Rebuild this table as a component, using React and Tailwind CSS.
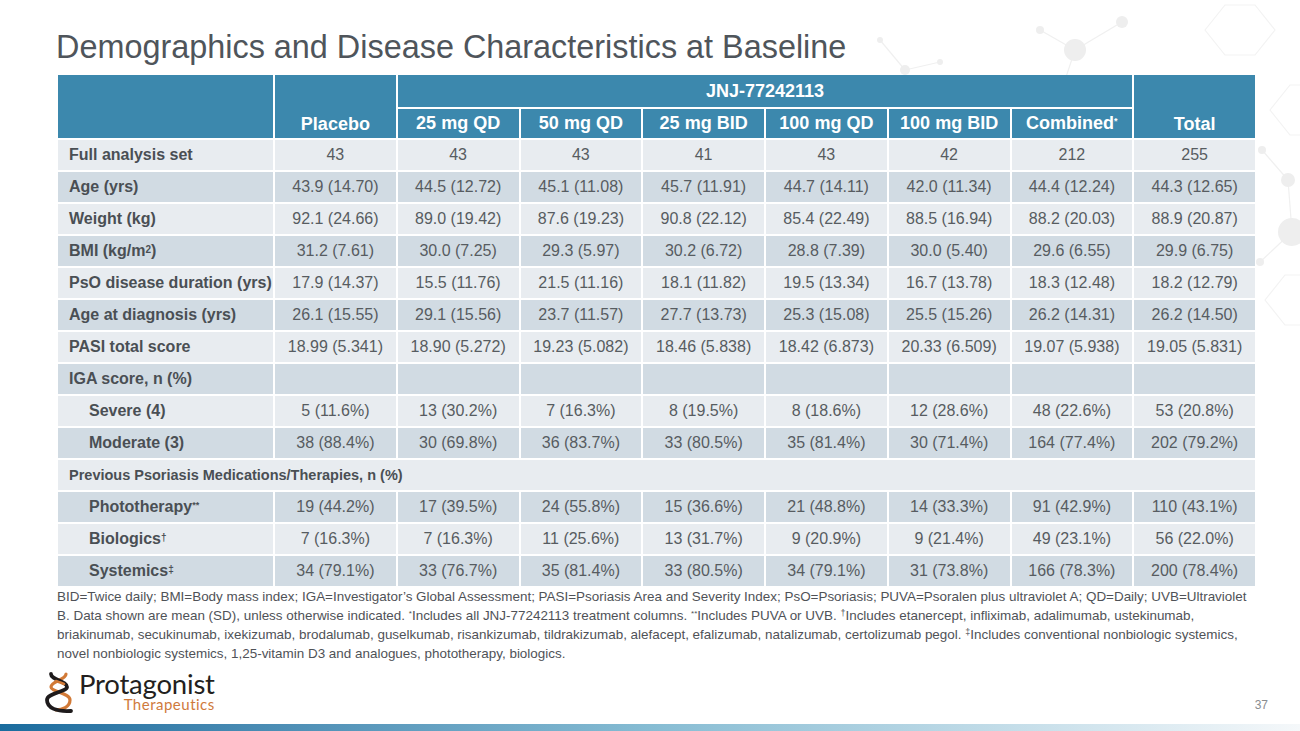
import React from 'react';

const rows = [
  { label: 'Full analysis set', v: ['43', '43', '43', '41', '43', '42', '212', '255'] },
  { label: 'Age (yrs)', v: ['43.9 (14.70)', '44.5 (12.72)', '45.1 (11.08)', '45.7 (11.91)', '44.7 (14.11)', '42.0 (11.34)', '44.4 (12.24)', '44.3 (12.65)'] },
  { label: 'Weight (kg)', v: ['92.1 (24.66)', '89.0 (19.42)', '87.6 (19.23)', '90.8 (22.12)', '85.4 (22.49)', '88.5 (16.94)', '88.2 (20.03)', '88.9 (20.87)'] },
  { label: <>BMI (kg/m<sup className="text-[10px] relative -top-[1px]">2</sup>)</>, v: ['31.2 (7.61)', '30.0 (7.25)', '29.3 (5.97)', '30.2 (6.72)', '28.8 (7.39)', '30.0 (5.40)', '29.6 (6.55)', '29.9 (6.75)'] },
  { label: 'PsO disease duration (yrs)', v: ['17.9 (14.37)', '15.5 (11.76)', '21.5 (11.16)', '18.1 (11.82)', '19.5 (13.34)', '16.7 (13.78)', '18.3 (12.48)', '18.2 (12.79)'] },
  { label: 'Age at diagnosis (yrs)', v: ['26.1 (15.55)', '29.1 (15.56)', '23.7 (11.57)', '27.7 (13.73)', '25.3 (15.08)', '25.5 (15.26)', '26.2 (14.31)', '26.2 (14.50)'] },
  { label: 'PASI total score', v: ['18.99 (5.341)', '18.90 (5.272)', '19.23 (5.082)', '18.46 (5.838)', '18.42 (6.873)', '20.33 (6.509)', '19.07 (5.938)', '19.05 (5.831)'] },
  { label: 'IGA score, n (%)', v: ['', '', '', '', '', '', '', ''] },
  { label: 'Severe (4)', indent: true, v: ['5 (11.6%)', '13 (30.2%)', '7 (16.3%)', '8 (19.5%)', '8 (18.6%)', '12 (28.6%)', '48 (22.6%)', '53 (20.8%)'] },
  { label: 'Moderate (3)', indent: true, v: ['38 (88.4%)', '30 (69.8%)', '36 (83.7%)', '33 (80.5%)', '35 (81.4%)', '30 (71.4%)', '164 (77.4%)', '202 (79.2%)'] },
  { span: 'Previous Psoriasis Medications/Therapies, n (%)' },
  { label: <>Phototherapy<sup className="text-[9px] relative -top-[2px]">**</sup></>, indent: true, v: ['19 (44.2%)', '17 (39.5%)', '24 (55.8%)', '15 (36.6%)', '21 (48.8%)', '14 (33.3%)', '91 (42.9%)', '110 (43.1%)'] },
  { label: <>Biologics<sup className="text-[10px] relative -top-[1px]">†</sup></>, indent: true, v: ['7 (16.3%)', '7 (16.3%)', '11 (25.6%)', '13 (31.7%)', '9 (20.9%)', '9 (21.4%)', '49 (23.1%)', '56 (22.0%)'] },
  { label: <>Systemics<sup className="text-[10px] relative -top-[1px]">‡</sup></>, indent: true, v: ['34 (79.1%)', '33 (76.7%)', '35 (81.4%)', '33 (80.5%)', '34 (79.1%)', '31 (73.8%)', '166 (78.3%)', '200 (78.4%)'] },
];

const doses = ['25 mg QD', '50 mg QD', '25 mg BID', '100 mg QD', '100 mg BID'];

function Backdrop() {
  return (
    <svg className="absolute top-0 left-0 pointer-events-none" width="1300" height="360" viewBox="0 0 1300 360" fill="none">
      <g stroke="#f0f0f0" strokeWidth="1.2">
        <line x1="1040" y1="30" x2="1075" y2="50" />
        <line x1="1075" y1="50" x2="1122" y2="22" />
        <line x1="1075" y1="50" x2="1060" y2="95" />
        <line x1="880" y1="40" x2="905" y2="70" />
        <line x1="905" y1="70" x2="940" y2="62" />
        <line x1="1262" y1="150" x2="1288" y2="180" />
        <line x1="1288" y1="180" x2="1292" y2="232" />
        <line x1="1292" y1="232" x2="1260" y2="262" />
      </g>
      <g stroke="#f3f3f3" strokeWidth="1.2">
        <polygon points="1205,30 1225,5 1255,5 1275,30 1255,55 1225,55" />
        <polygon points="1270,110 1290,85 1320,85 1340,110 1320,135 1290,135" />
        <polygon points="1265,300 1285,275 1315,275 1335,300 1315,325 1285,325" />
      </g>
      <g fill="#eeeeee">
        <circle cx="1075" cy="50" r="11" />
        <circle cx="1122" cy="22" r="6" />
        <circle cx="1040" cy="30" r="4" />
        <circle cx="1060" cy="95" r="5" />
        <circle cx="905" cy="70" r="5" />
        <circle cx="880" cy="40" r="3" />
        <circle cx="940" cy="62" r="3" />
        <circle cx="1262" cy="150" r="4" />
        <circle cx="1288" cy="180" r="7" />
        <circle cx="1292" cy="232" r="14" />
        <circle cx="1260" cy="262" r="4" />
      </g>
    </svg>
  );
}

function Helix() {
  return (
    <svg width="32" height="42" viewBox="0 0 32 42" fill="none" className="mt-[2px]">
      <path d="M23 2 C23 8, 8 9, 8 15 C8 20, 27 21, 27 28 C27 35, 19 38, 13 38" stroke="#d27a37" strokeWidth="3.2" strokeLinecap="round" />
      <path d="M8 2 C8 8, 24 9, 24 15 C24 20, 4 21, 4 28 C4 36, 14 40, 28 39" stroke="#1e1b1c" strokeWidth="3.8" strokeLinecap="round" />
      <path d="M13 9 C16 10, 19 11, 21 12" stroke="#d27a37" strokeWidth="2.6" strokeLinecap="round" />
    </svg>
  );
}

export default function App() {
  const light = 'bg-[#e8ecf0]';
  const dark = 'bg-[#d1dbe3]';
  return (
    <div className="relative w-[1300px] h-[731px] overflow-hidden bg-white font-['Liberation_Sans',Arial,sans-serif]">
      <Backdrop />
      <div className="relative flex flex-col h-full">
        <h1 className="pt-[31px] pl-[56px] text-[32.4px] leading-none text-[#4f555b] font-normal">
          Demographics and Disease Characteristics at Baseline
        </h1>

        <div className="mt-[12px] ml-[58px] w-[1197px] grid grid-cols-[215px_repeat(8,minmax(0,1fr))] gap-[2px]">
          {/* header */}
          <div className="row-span-2 bg-[#3c88ad]" />
          <div className="row-span-2 bg-[#3c88ad] flex items-end justify-center text-white font-bold text-[18px]">Placebo</div>
          <div className="col-span-6 h-[32px] bg-[#3c88ad] flex items-center justify-center text-white font-bold text-[18px]">JNJ-77242113</div>
          <div className="row-span-2 bg-[#3c88ad] flex items-end justify-center text-white font-bold text-[18px]">Total</div>
          {doses.map((d) => (
            <div key={d} className="h-[29px] bg-[#3c88ad] flex items-center justify-center text-white font-bold text-[18px] whitespace-nowrap">{d}</div>
          ))}
          <div className="h-[29px] bg-[#3c88ad] flex items-center justify-center text-white font-bold text-[18px] whitespace-nowrap">
            Combined<sup className="text-[9px] relative -top-[3px]">*</sup>
          </div>

          {/* body */}
          {rows.map((r, i) => {
            const bg = i % 2 === 0 ? light : dark;
            if (r.span) {
              return (
                <div key={i} className={`col-span-9 h-[30px] ${bg} flex items-center pl-[11px] text-[14.5px] font-bold text-[#4a4f54] whitespace-nowrap`}>
                  {r.span}
                </div>
              );
            }
            return (
              <React.Fragment key={i}>
                <div className={`h-[30px] ${bg} flex items-center ${r.indent ? 'pl-[31px]' : 'pl-[11px]'} text-[16px] font-bold text-[#4a4f54] whitespace-nowrap`}>
                  {r.label}
                </div>
                {r.v.map((c, j) => (
                  <div key={j} className={`h-[30px] ${bg} flex items-center justify-center text-[16px] text-[#575c61] whitespace-nowrap`}>
                    {c}
                  </div>
                ))}
              </React.Fragment>
            );
          })}
        </div>

        <div className="pl-[57px] pt-[1px] text-[13.45px] leading-[19px] text-[#4f5257] whitespace-nowrap">
          <div>BID=Twice daily; BMI=Body mass index; IGA=Investigator’s Global Assessment; PASI=Psoriasis Area and Severity Index; PsO=Psoriasis; PUVA=Psoralen plus ultraviolet A; QD=Daily; UVB=Ultraviolet</div>
          <div>
            B. Data shown are mean (SD), unless otherwise indicated. <sup className="text-[8px]">*</sup>Includes all JNJ-77242113 treatment columns. <sup className="text-[8px]">**</sup>Includes PUVA or UVB. <sup className="text-[9px]">†</sup>Includes etanercept, infliximab, adalimumab, ustekinumab,
          </div>
          <div>
            briakinumab, secukinumab, ixekizumab, brodalumab, guselkumab, risankizumab, tildrakizumab, alefacept, efalizumab, natalizumab, certolizumab pegol. <sup className="text-[9px]">‡</sup>Includes conventional nonbiologic systemics,
          </div>
          <div>novel nonbiologic systemics, 1,25-vitamin D3 and analogues, phototherapy, biologics.</div>
        </div>

        <div className="flex-1 flex items-start justify-between pl-[43px] pr-[32px] pt-[7px]">
          <div className="flex items-start gap-[4px]">
            <Helix />
            <div className="flex flex-col items-end font-['Lato',sans-serif]">
              <span className="text-[27.5px] leading-[27px] text-[#231f20] tracking-[-0.2px]">Protagonist</span>
              <span className="text-[15px] leading-[15px] text-[#cf7a3c] tracking-[0.5px]">Therapeutics</span>
            </div>
          </div>
          <span className="self-end mb-[10px] text-[12px] text-[#8a8d90]">37</span>
        </div>

        <div className="h-[7px] bg-gradient-to-r from-[#1a6c9e] via-[#86bcd3] to-[#f5f8fa]" />
      </div>
    </div>
  );
}
